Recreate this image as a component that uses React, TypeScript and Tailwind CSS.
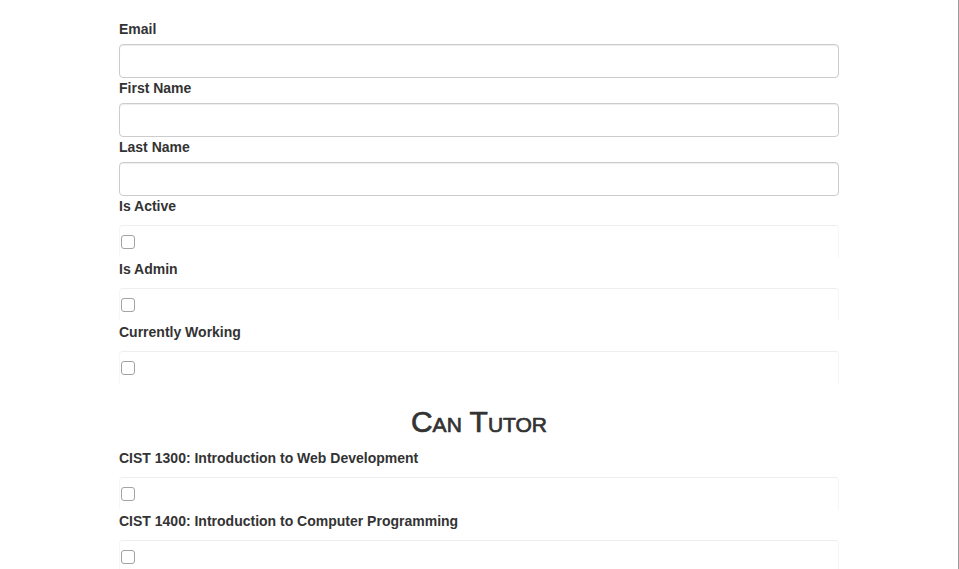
const textFields = ['Email', 'First Name', 'Last Name'];
const flags = ['Is Active', 'Is Admin', 'Currently Working'];
const courses = [
  'CIST 1300: Introduction to Web Development',
  'CIST 1400: Introduction to Computer Programming',
];

function Label({ children }: { children: string }) {
  return <label className="block text-sm leading-5 font-bold text-[#333]">{children}</label>;
}

function CheckField({ label }: { label: string }) {
  return (
    <div>
      <Label>{label}</Label>
      <div className="mt-[9px] h-[34px] rounded-[4px] border border-[#eeeeee] border-x-[#f6f6f6] border-b-transparent pt-[9px] pl-[1px]">
        <span className="block w-[14px] h-[14px] rounded-[3px] border border-[#a3a3a3] bg-white" />
      </div>
    </div>
  );
}

export default function App() {
  return (
    <div className="h-screen overflow-hidden bg-white border-r border-[#9a9a9a] font-['Liberation_Sans',Arial,sans-serif]">
      <div className="w-[720px] mx-auto pt-[19px]">
        {textFields.map((f) => (
          <div key={f}>
            <Label>{f}</Label>
            <input
              type="text"
              className="mt-[5px] block w-full h-[34px] rounded-[4px] border border-[#ccc] shadow-[inset_0_1px_1px_rgba(0,0,0,0.075)] px-3 outline-none"
            />
          </div>
        ))}
        {flags.map((f) => (
          <CheckField key={f} label={f} />
        ))}
        <h2 className="mt-5 mb-[10px] text-center text-[30px] leading-[33px] font-medium text-[#333] [font-variant:small-caps] [-webkit-text-stroke:0.7px_#333]">
          Can Tutor
        </h2>
        {courses.map((c) => (
          <CheckField key={c} label={c} />
        ))}
      </div>
    </div>
  );
}
